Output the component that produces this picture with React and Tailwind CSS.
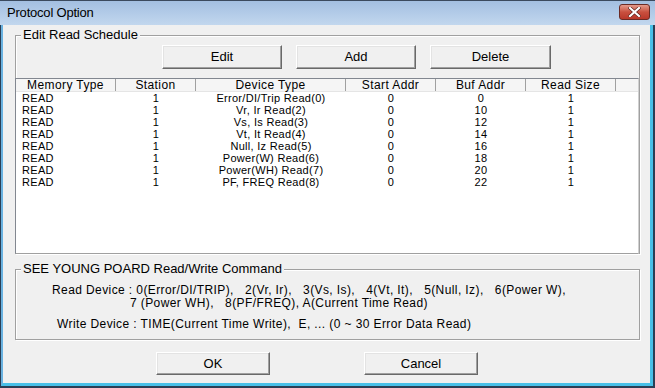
const rows = [
  ['READ', '1', 'Error/DI/Trip Read(0)', '0', '0', '1'],
  ['READ', '1', 'Vr, Ir Read(2)', '0', '10', '1'],
  ['READ', '1', 'Vs, Is Read(3)', '0', '12', '1'],
  ['READ', '1', 'Vt, It Read(4)', '0', '14', '1'],
  ['READ', '1', 'Null, Iz Read(5)', '0', '16', '1'],
  ['READ', '1', 'Power(W) Read(6)', '0', '18', '1'],
  ['READ', '1', 'Power(WH) Read(7)', '0', '20', '1'],
  ['READ', '1', 'PF, FREQ Read(8)', '0', '22', '1'],
];

const cols = [
  { name: 'Memory Type', w: 'w-[100px]', align: 'text-left pl-[6px]' },
  { name: 'Station', w: 'w-[80px]', align: 'text-center' },
  { name: 'Device Type', w: 'w-[150px]', align: 'text-center' },
  { name: 'Start Addr', w: 'w-[90px]', align: 'text-center' },
  { name: 'Buf Addr', w: 'w-[90px]', align: 'text-center' },
  { name: 'Read Size', w: 'w-[90px]', align: 'text-center' },
];

const Button = ({ children, className }) => (
  <button
    type="button"
    className={`bg-[#f0f0f0] border border-t-white border-l-white border-r-[#696969] border-b-[#696969] shadow-[inset_-1px_-1px_0_#a0a0a0,inset_1px_1px_0_#e3e3e3] text-[13px] text-black ${className}`}
  >
    {children}
  </button>
);

const GroupBox = ({ label, className, children }) => (
  <div className={`relative border border-[#a0a0a0] shadow-[inset_1px_1px_0_#fff,1px_1px_0_#fff] ${className}`}>
    <span className="absolute left-[5px] top-[-9px] bg-[#f0f0f0] px-[2px] text-[13px] tracking-normal leading-[16px] text-black">
      {label}
    </span>
    {children}
  </div>
);

export default function App() {
  return (
    <div className="w-[655px] h-[388px] flex flex-col bg-[#2a3f55] font-['Liberation_Sans',Arial,sans-serif] overflow-hidden">
      <div className="h-[25px] flex items-center justify-between pl-[7px] pr-[5px] bg-gradient-to-b from-[#a3bfe1] to-[#c2d7ee] border-t border-[#3b4a5e]">
        <span className="text-[13px] tracking-[-0.2px] text-black">Protocol Option</span>
        <div className="w-[31px] h-[16px] mb-[3px] rounded-[3px] border border-[#6b2b25] bg-gradient-to-b from-[#e39a8c] via-[#c9503f] to-[#b9382a] flex items-center justify-center">
          <svg width="13" height="10" viewBox="0 0 13 10">
            <path d="M2 1 L11 9 M11 1 L2 9" stroke="#5a1e18" strokeWidth="3.4" strokeLinecap="square" />
            <path d="M2 1 L11 9 M11 1 L2 9" stroke="#fff" strokeWidth="2.2" strokeLinecap="square" />
          </svg>
        </div>
      </div>
      <div className="flex-1 flex flex-col bg-[#f0f0f0] border-l-[2px] border-l-[#6ab2e0] border-r-[3px] border-r-[#48c0e8] border-b-[3px] border-b-[#48c0e8] ml-px mr-[2px] mb-[2px]">
        <div className="pl-[12px] pr-[10px] pt-[10px]">
          <GroupBox label="Edit Read Schedule" className="h-[219px] flex flex-col">
            <div className="flex gap-[14px] pl-[146px] pt-[9px]">
              <Button className="w-[120px] h-[24px]">Edit</Button>
              <Button className="w-[120px] h-[24px]">Add</Button>
              <Button className="w-[121px] h-[24px]">Delete</Button>
            </div>
            <div className="mt-[9px] -ml-px mr-0 -mb-px flex-1 bg-white border border-[#828790] border-r-[#d0d0d0] border-b-[#a0a0a0] overflow-hidden">
              <div className="flex h-[13px] bg-[#f5f5f5] border-b border-[#e5e5e5]">
                {cols.map((c) => (
                  <div key={c.name} className={`${c.w} border-r border-[#a0a0a0] text-center text-[12px] tracking-[0.4px] leading-[12px] text-black whitespace-nowrap`}>
                    {c.name}
                  </div>
                ))}
                <div className="flex-1" />
              </div>
              {rows.map((r, i) => (
                <div key={i} className="flex h-[12px] text-[11px] tracking-[0.3px] leading-[12px] text-black">
                  {r.map((v, j) => (
                    <div key={j} className={`${cols[j].w} ${cols[j].align} whitespace-nowrap`}>
                      {v}
                    </div>
                  ))}
                </div>
              ))}
            </div>
          </GroupBox>
          <GroupBox label="SEE YOUNG POARD Read/Write Command" className="mt-[15px] h-[71px] text-[12px] tracking-[0.4px] text-black">
            <div className="pt-[14px] pl-[36px] leading-[13px]">
              <div className="whitespace-pre">{'Read Device : 0(Error/DI/TRIP),   2(Vr, Ir),   3(Vs, Is),   4(Vt, It),   5(Null, Iz),   6(Power W),'}</div>
              <div className="whitespace-pre pl-[78px]">{'7 (Power WH),   8(PF/FREQ), A(Current Time Read)'}</div>
              <div className="whitespace-pre pl-[5px] mt-[8px]">{'Write Device : TIME(Current Time Write),  E, ... (0 ~ 30 Error Data Read)'}</div>
            </div>
          </GroupBox>
        </div>
        <div className="flex gap-[94px] pl-[153px] pt-[12px]">
          <Button className="w-[114px] h-[23px]">OK</Button>
          <Button className="w-[114px] h-[23px]">Cancel</Button>
        </div>
      </div>
    </div>
  );
}
